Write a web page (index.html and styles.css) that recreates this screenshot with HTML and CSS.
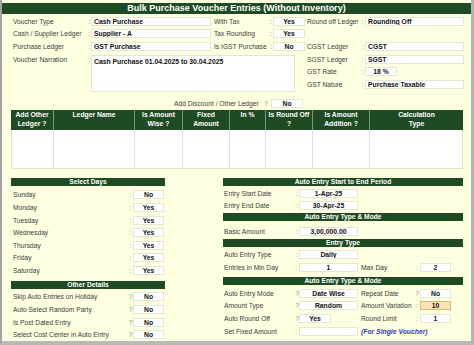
FILE: index.html
```html
<!DOCTYPE html>
<html>
<head>
<meta charset="utf-8">
<link rel="stylesheet" href="styles.css">
</head>
<body>
<div class="frame">
  <div class="title">Bulk Purchase Voucher Entries (Without Inventory)</div>

  <div class="top">
    <span class="lbl">Voucher Type</span><span class="col">:</span><span class="fld">Cash Purchase</span><span></span>
    <span class="lbl">With Tax</span><span class="col">:</span><span class="fld c">Yes</span><span></span>
    <span class="lbl">Round off Ledger</span><span class="col">:</span><span class="fld">Rounding Off</span>

    <span class="lbl">Cash / Supplier Ledger</span><span class="col">:</span><span class="fld">Supplier - A</span><span></span>
    <span class="lbl">Tax Rounding</span><span class="col">:</span><span class="fld c">Yes</span><span></span>
    <span></span><span></span><span></span>

    <span class="lbl">Purchase Ledger</span><span class="col">:</span><span class="fld">GST Purchase</span><span></span>
    <span class="lbl">Is IGST Purchase</span><span class="col">:</span><span class="fld c">No</span><span></span>
    <span class="lbl">CGST Ledger</span><span class="col">:</span><span class="fld">CGST</span>

    <span class="lbl">Voucher Narration</span><span class="col">:</span>
    <div class="narr">Cash Purchase 01.04.2025 to 30.04.2025</div>
    <span></span>
    <span class="lbl">SGST Ledger</span><span class="col">:</span><span class="fld">SGST</span>

    <span></span><span></span><span></span>
    <span class="lbl">GST Rate</span><span class="col">:</span><span class="fld c short">18 %</span>

    <span></span><span></span><span></span>
    <span class="lbl">GST Nature</span><span class="col">:</span><span class="fld">Purchase Taxable</span>
  </div>

  <div class="adddisc">
    <span class="lbl ad-lbl">Add Discount / Other Ledger</span>
    <span class="col ad-q">?</span>
    <span class="fld c ad-fld">No</span>
  </div>

  <div class="tbl">
    <div class="th">Add Other<br>Ledger ?</div>
    <div class="th">Ledger Name</div>
    <div class="th">Is Amount<br>Wise ?</div>
    <div class="th">Fixed<br>Amount</div>
    <div class="th">In %</div>
    <div class="th">Is Round Off<br>?</div>
    <div class="th">Is Amount<br>Addition ?</div>
    <div class="th last">Calculation<br>Type</div>
    <div class="td first"></div>
    <div class="td"></div>
    <div class="td"></div>
    <div class="td"></div>
    <div class="td"></div>
    <div class="td"></div>
    <div class="td"></div>
    <div class="td"></div>
  </div>

  <div class="bottom">
    <div class="left">
      <div class="bar">Select Days</div>
      <div class="lrows">
        <div class="lrow"><span class="lbl">Sunday</span><span class="col">:</span><span class="fld c">No</span></div>
        <div class="lrow"><span class="lbl">Monday</span><span class="col">:</span><span class="fld c">Yes</span></div>
        <div class="lrow"><span class="lbl">Tuesday</span><span class="col">:</span><span class="fld c">Yes</span></div>
        <div class="lrow"><span class="lbl">Wednesday</span><span class="col">:</span><span class="fld c">Yes</span></div>
        <div class="lrow"><span class="lbl">Thursday</span><span class="col">:</span><span class="fld c">Yes</span></div>
        <div class="lrow"><span class="lbl">Friday</span><span class="col">:</span><span class="fld c">Yes</span></div>
        <div class="lrow"><span class="lbl">Saturday</span><span class="col">:</span><span class="fld c">Yes</span></div>
      </div>
      <div class="bar bar-other">Other Details</div>
      <div class="lrows lrows-other">
        <div class="lrow"><span class="lbl">Skip Auto Entries on Holiday</span><span class="col">?</span><span class="fld c">No</span></div>
        <div class="lrow"><span class="lbl">Auto Select Random Party</span><span class="col">?</span><span class="fld c">No</span></div>
        <div class="lrow"><span class="lbl">Is Post Dated Entry</span><span class="col">?</span><span class="fld c">No</span></div>
        <div class="lrow"><span class="lbl">Select Cost Center in Auto Entry</span><span class="col">?</span><span class="fld c">No</span></div>
      </div>
    </div>

    <div class="right">
      <div class="bar">Auto Entry Start to End Period</div>
      <div class="rrow m-a"><span class="lbl">Entry Start Date</span><span class="col">:</span><span class="fld c">1-Apr-25</span></div>
      <div class="rrow"><span class="lbl">Entry End Date</span><span class="col">:</span><span class="fld c">30-Apr-25</span></div>
      <div class="bar m-b">Auto Entry Type &amp; Mode</div>
      <div class="rrow m-c"><span class="lbl">Basic Amount</span><span class="col">:</span><span class="fld c">3,00,000.00</span></div>
      <div class="bar m-d">Entry Type</div>
      <div class="rrow m-e"><span class="lbl">Auto Entry Type</span><span class="col">:</span><span class="fld c">Daily</span></div>
      <div class="rrow"><span class="lbl">Entries in Min Day</span><span class="col">:</span><span class="fld c">1</span><span></span><span class="lbl">Max Day</span><span class="col">:</span><span class="fld c">2</span></div>
      <div class="bar m-f">Auto Entry Type &amp; Mode</div>
      <div class="rrow m-g"><span class="lbl">Auto Entry Mode</span><span class="col">?</span><span class="fld c">Date Wise</span><span></span><span class="lbl">Repeat Date</span><span class="col">?</span><span class="fld c">No</span></div>
      <div class="rrow"><span class="lbl">Amount Type</span><span class="col">?</span><span class="fld c">Random</span><span></span><span class="lbl">Amount Variation</span><span class="col">:</span><span class="fld c hl">10</span></div>
      <div class="rrow"><span class="lbl">Auto Round Off</span><span class="col">?</span><span class="fld c short">Yes</span><span></span><span class="lbl">Round Limit</span><span class="col">:</span><span class="fld c">1</span></div>
      <div class="rrow"><span class="lbl">Set Fixed Amount</span><span class="col">:</span><span class="fld"></span><span></span><span class="note">(For Single Voucher)</span></div>
    </div>
  </div>
</div>
</body>
</html>
```

FILE: styles.css
```css
* { box-sizing: border-box; }

body {
  margin: 0;
  background: #b9b9b9;
  font-family: "Liberation Sans", Arial, sans-serif;
}

.frame {
  width: 474px;
  height: 345px;
  background: #fefee1;
  border-left: 2px solid #a4a4a4;
  border-right: 3px solid #b4b4b4;
  border-bottom: 4px solid #b9b9b9;
  padding-top: 3px;
  display: flex;
  flex-direction: column;
  overflow: hidden;
}

.title {
  height: 11px;
  background: #1e4b23;
  color: #fff;
  font-weight: bold;
  font-size: 9px;
  line-height: 11px;
  text-align: center;
  white-space: nowrap;
}

.lbl {
  font-size: 6.7px;
  color: #3c3c3c;
  white-space: nowrap;
}

.col {
  font-size: 6.7px;
  color: #8c8c8c;
  text-align: center;
}

.fld {
  height: 9px;
  background: #fff;
  border: 1px solid #e6e6d6;
  font-size: 6.8px;
  font-weight: bold;
  color: #111;
  line-height: 7px;
  padding-left: 2px;
  white-space: nowrap;
  overflow: hidden;
}

.fld.c {
  text-align: center;
  padding-left: 0;
}

.fld.short {
  width: 32px;
  justify-self: start;
}

.fld.hl {
  background: #fde3b4;
  border-color: #d9b77a;
}

/* top form */
.top {
  display: grid;
  grid-template-columns: 75px 3px 120px 3px 55px 4px 32px 2px 54px 4px 99px;
  grid-auto-rows: 12.6px;
  align-items: center;
  padding-left: 11px;
  margin-top: 1px;
}

.narr {
  grid-row: 4 / span 3;
  grid-column: 3 / span 5;
  align-self: start;
  margin-top: 2px;
  margin-right: 10px;
  height: 37px;
  background: #fff;
  border: 1px solid #e4e4d4;
  padding: 2px 2px;
  font-size: 6.8px;
  font-weight: bold;
  color: #111;
  line-height: 8px;
}

.adddisc {
  display: flex;
  align-items: center;
  height: 9px;
  margin-top: 8.4px;
  padding-left: 172px;
}

.ad-lbl { width: 88px; }
.ad-q { width: 8px; }
.ad-fld { width: 32px; margin-left: 1px; }

/* table */
.tbl {
  display: grid;
  grid-template-columns: 43px 81px 48px 47px 36px 47px 57px 93px;
  grid-template-rows: 20px 39px;
  width: 452px;
  margin-left: 9px;
  margin-top: 2px;
}

.th {
  background: #1e4b23;
  color: #fff;
  font-weight: bold;
  font-size: 6.8px;
  line-height: 8.6px;
  text-align: center;
  padding-top: 1.4px;
  border-right: 1px solid #7d967d;
  white-space: nowrap;
}

.th.last { border-right: none; }

.td {
  background: #fff;
  border-right: 1px solid #e2e2d2;
  border-bottom: 1px solid #e2e2d2;
}

.td.first { border-left: 1px solid #e2e2d2; }

/* bottom */
.bottom {
  display: flex;
  gap: 58px;
  margin-top: 9px;
  padding-left: 9px;
}

.left { width: 154px; }
.right { width: 240px; }

.bar {
  height: 8px;
  background: #1e4b23;
  color: #fff;
  font-weight: bold;
  font-size: 6.7px;
  line-height: 8px;
  text-align: center;
  white-space: nowrap;
}

.lrows { padding-top: 2.7px; }
.bar-other { margin-top: 3.8px; }
.lrows-other { padding-top: 2px; }

.lrow {
  display: grid;
  grid-template-columns: 115px 5px 31px;
  height: 12.6px;
  align-items: center;
  padding-left: 2px;
}

.rrow {
  display: grid;
  grid-template-columns: 71px 4px 59px 3px 53px 6px 31px;
  height: 12.6px;
  align-items: center;
  padding-left: 1px;
}

.m-a { margin-top: 1px; }
.m-b { margin-top: 0.6px; }
.m-c { margin-top: 4.2px; }
.m-d { margin-top: 1.4px; }
.m-e { margin-top: 1.7px; }
.m-f { margin-top: 2.8px; }
.m-g { margin-top: 2.5px; }

.note {
  grid-column: 5 / span 3;
  font-size: 6.8px;
  font-weight: bold;
  font-style: italic;
  color: #2a3fae;
  white-space: nowrap;
}
```
